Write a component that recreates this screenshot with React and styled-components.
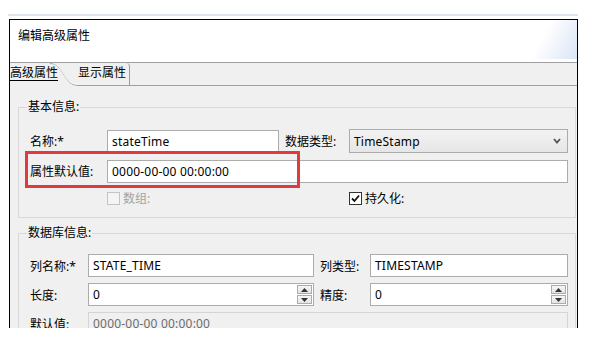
import React from 'react';
import styled, { createGlobalStyle } from 'styled-components';

const GlobalStyle = createGlobalStyle`
  html, body { margin: 0; padding: 0; background: #fff; }
  body {
    font-family: "Noto Sans", "Noto Sans CJK SC", sans-serif;
    font-size: 12px;
    color: #000;
  }
`;

const Page = styled.div`
  width: 599px;
  height: 342px;
  padding: 14px 0 0 8px;
  box-sizing: border-box;
  overflow: hidden;
`;

const TopStrip = styled.div`
  width: 570px;
  height: 2px;
  background: #dfe5ec;
  margin-bottom: 3px;
`;

const Dialog = styled.div`
  margin-left: 1px;
  width: 569px;
  height: 309px;
  box-sizing: border-box;
  border: 1px solid #000;
  border-bottom: none;
  background: #f0f0f0;
  overflow: hidden;
`;

const Header = styled.div`
  height: 43px;
  box-sizing: border-box;
  padding: 8px 8px 0;
  border-bottom: 1px solid #a0a0a0;
  line-height: 16px;
  background:
    linear-gradient(118deg, rgba(255,255,255,0) 45%, #dbe5f6 100%) no-repeat right top / 64px 39px,
    #fff;
`;

const TabBar = styled.div`
  display: flex;
  height: 23px;
  line-height: 16px;
`;

const ActiveTab = styled.div`
  width: 48px;
  padding-top: 2px;
  white-space: nowrap;
  span {
    text-decoration: underline;
    text-underline-offset: 3px;
  }
`;

const TabCurve = styled.svg`
  display: block;
  margin-left: -8px;
  flex: none;
`;

const Tab = styled.div`
  width: 51px;
  padding-top: 2px;
  border-right: 1px solid #9c9c9c;
  border-bottom: 1px solid #a0a0a0;
  border-top-right-radius: 4px;
  white-space: nowrap;
`;

const TabFill = styled.div`
  flex: 1;
  border-bottom: 1px solid #a0a0a0;
`;

const Content = styled.div`
  position: relative;
  display: flow-root;
`;

const Group = styled.fieldset`
  margin: ${p => p.$top}px 1px 0 8px;
  padding: ${p => p.$padTop}px 7px ${p => p.$padBottom}px 11px;
  border: 1px solid #d9d9d9;
  min-width: 0;
`;

const Legend = styled.legend`
  margin-left: -3px;
  padding: 0 1px;
  line-height: 16px;
`;

const FormGrid = styled.div`
  display: grid;
  grid-template-columns: ${p => p.$cols};
  grid-template-rows: ${p => p.$rows};
  row-gap: 6px;
  align-items: center;
`;

const Label = styled.div`
  padding-left: ${p => p.$indent || 0}px;
  white-space: nowrap;
`;

const Field = styled.div`
  height: ${p => p.$h || 23}px;
  box-sizing: border-box;
  display: flex;
  align-items: center;
  padding-left: 4px;
  border: 1px solid ${p => (p.$disabled ? '#d5d5d5' : '#acacac')};
  background: ${p => (p.$disabled ? '#f0f0f0' : '#fff')};
  color: ${p => (p.$disabled ? '#6d6d6d' : '#000')};
  grid-column: ${p => p.$span || 'auto'};
  white-space: nowrap;
  letter-spacing: 0.2px;
  overflow: hidden;
`;

const FieldText = styled.div`
  flex: 1;
`;

const Select = styled.div`
  height: 24px;
  box-sizing: border-box;
  display: flex;
  align-items: center;
  justify-content: space-between;
  padding: 0 6px 0 4px;
  border: 1px solid #acacac;
  background: linear-gradient(#f3f3f3, #e6e6e6);
  letter-spacing: 0.2px;
`;

const Spinner = styled.div`
  display: flex;
  flex-direction: column;
  gap: 1px;
  margin-right: 1px;
`;

const SpinButton = styled.div`
  width: 15px;
  height: 9px;
  box-sizing: border-box;
  border: 1px solid #acacac;
  background: linear-gradient(#f6f6f6, #e4e4e4);
  display: flex;
  align-items: center;
  justify-content: center;
`;

const CheckCell = styled.div`
  display: flex;
  align-items: center;
  gap: 3px;
  color: ${p => (p.$disabled ? '#a3a3a3' : '#000')};
  white-space: nowrap;
`;

const Box = styled.div`
  width: 13px;
  height: 13px;
  box-sizing: border-box;
  border: 1px solid ${p => (p.$disabled ? '#c4c4c4' : '#333')};
  background: ${p => (p.$disabled ? '#f4f4f4' : '#fff')};
  display: flex;
  align-items: center;
  justify-content: center;
`;

const Highlight = styled.div`
  position: absolute;
  left: 15px;
  top: 65px;
  width: 275px;
  height: 37px;
  box-sizing: border-box;
  border: 3px solid #e0393e;
  pointer-events: none;
`;

function Arrow({ up }) {
  return (
    <svg width="7" height="4" viewBox="0 0 7 4">
      <path d={up ? 'M0 4 L3.5 0 L7 4 Z' : 'M0 0 L3.5 4 L7 0 Z'} fill="#333" />
    </svg>
  );
}

function SpinField({ value }) {
  return (
    <Field>
      <FieldText>{value}</FieldText>
      <Spinner>
        <SpinButton><Arrow up /></SpinButton>
        <SpinButton><Arrow /></SpinButton>
      </Spinner>
    </Field>
  );
}

function Check({ checked, disabled, label }) {
  return (
    <CheckCell $disabled={disabled}>
      <Box $disabled={disabled}>
        {checked && (
          <svg width="9" height="9" viewBox="0 0 9 9">
            <path d="M1 4.5 L3.5 7 L8 1.5" stroke="#111" strokeWidth="1.8" fill="none" />
          </svg>
        )}
      </Box>
      {label}
    </CheckCell>
  );
}

export default function App() {
  return (
    <>
      <GlobalStyle />
      <Page>
        <TopStrip />
        <Dialog>
          <Header>编辑高级属性</Header>
          <TabBar>
            <ActiveTab><span>高级属性</span></ActiveTab>
            <TabCurve width="28" height="23" viewBox="0 0 28 23">
              <path d="M0 0.5 C 13 0.5, 13 22.5, 28 22.5" stroke="#9c9c9c" fill="none" />
              <path d="M1 1.5 C 13 1.5, 12 21.5, 28 21.5" stroke="#fff" fill="none" opacity="0.8" />
            </TabCurve>
            <Tab>显示属性</Tab>
            <TabFill />
          </TabBar>
          <Content>
            <Group $top={13} $padTop={14} $padBottom={10}>
              <Legend>基本信息:</Legend>
              <FormGrid $cols="77px 172px 70px 219px" $rows="24px 24px 18px">
                <Label>名称:*</Label>
                <Field $h={22}>stateTime</Field>
                <Label $indent={6}>数据类型:</Label>
                <Select>
                  TimeStamp
                  <svg width="8" height="6" viewBox="0 0 8 6">
                    <path d="M1 1 L4 4.5 L7 1" stroke="#555" strokeWidth="1.8" fill="none" />
                  </svg>
                </Select>

                <Label>属性默认值:</Label>
                <Field $span="2 / 5">0000-00-00 00:00:00</Field>

                <div />
                <Check disabled label="数组:" />
                <div />
                <Check checked label="持久化:" />
              </FormGrid>
            </Group>

            <Group $top={7} $padTop={13} $padBottom={10}>
              <Legend>数据库信息:</Legend>
              <FormGrid $cols="58px 226px 56px 198px" $rows="23px 23px 23px">
                <Label>列名称:*</Label>
                <Field>STATE_TIME</Field>
                <Label $indent={6}>列类型:</Label>
                <Field>TIMESTAMP</Field>

                <Label>长度:</Label>
                <SpinField value="0" />
                <Label $indent={6}>精度:</Label>
                <SpinField value="0" />

                <Label>默认值:</Label>
                <Field $disabled $span="2 / 5">0000-00-00 00:00:00</Field>
              </FormGrid>
            </Group>
            <Highlight />
          </Content>
        </Dialog>
      </Page>
    </>
  );
}
